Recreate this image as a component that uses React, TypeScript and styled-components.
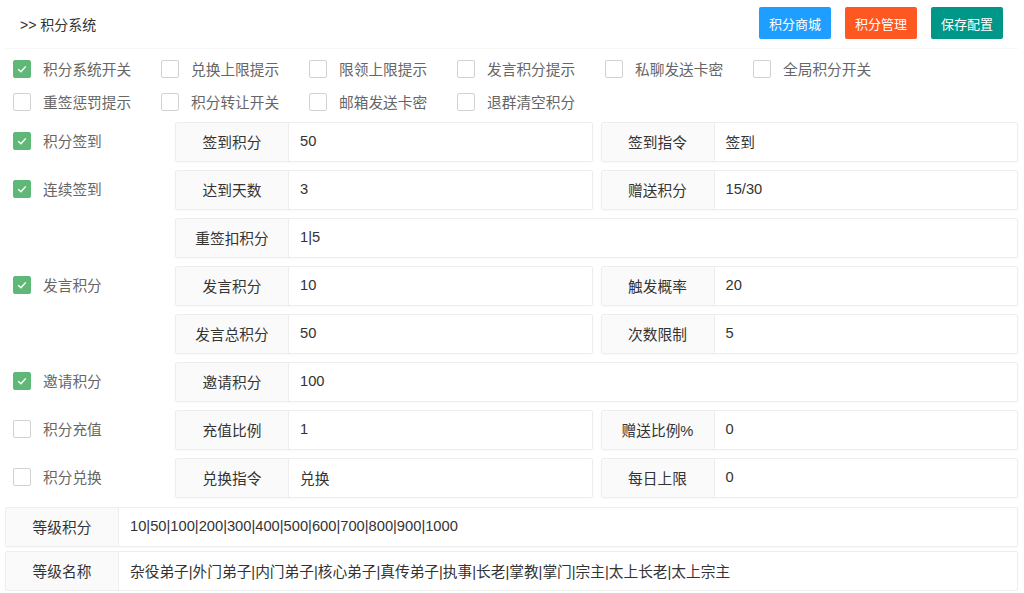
import React from 'react';
import styled, { createGlobalStyle } from 'styled-components';

const GlobalStyle = createGlobalStyle`
  html, body {
    margin: 0;
    padding: 0;
    background: #fff;
  }

  body {
    font-family: "Liberation Sans", "Noto Sans CJK SC", sans-serif;
    font-size: 14.7px;
    color: #333;
  }
`;

const Page = styled.div`
  width: 1024px;
  padding: 0 6px 0 5px;
  box-sizing: border-box;
`;

const Header = styled.div`
  height: 49px;
  padding: 0 15px;

  display: flex;
  align-items: center;
  justify-content: space-between;

  border-bottom: 1px solid #f8f8f8;
  box-sizing: border-box;
`;

const Title = styled.div`
  font-size: 14px;
  color: #333;
  margin-top: -1px;
`;

const Toolbar = styled.div`
  display: flex;
  gap: 14px;
  margin-top: -2px;
`;

const Button = styled.button<{ $color: string }>`
  height: 32px;
  padding: 0 10px;

  border: none;
  border-radius: 2px;
  background: ${ p => p.$color };
  color: #fff;

  font-family: inherit;
  font-size: 13px;
  cursor: pointer;
`;

const SwitchGrid = styled.div`
  padding: 3px 0 0 8px;
  margin-bottom: 4px;

  display: grid;
  grid-template-columns: repeat(6, 148px);
`;

const SwitchItem = styled.label`
  height: 33px;

  display: flex;
  align-items: center;

  color: #666;
  cursor: pointer;
`;

const Box = styled.span<{ $checked: boolean }>`
  width: 18px;
  height: 18px;
  flex-shrink: 0;
  margin-right: 12px;

  display: flex;
  align-items: center;
  justify-content: center;

  border: 1px solid ${ p => p.$checked ? '#5FB878' : '#d2d2d2' };
  border-radius: 2px;
  background: ${ p => p.$checked ? '#5FB878' : '#fff' };
  box-sizing: border-box;
`;

const Rows = styled.div`
  display: flex;
  flex-direction: column;
  gap: 8px;
`;

const FormRow = styled.div`
  display: flex;
`;

const RowSwitch = styled.div`
  width: 170px;
  padding: 0 0 3px 8px;
  flex-shrink: 0;

  display: flex;
  align-items: center;
  box-sizing: border-box;
`;

const Fields = styled.div`
  flex: 1;

  display: grid;
  grid-template-columns: 1fr 1fr;
  gap: 8px;
`;

const Field = styled.div<{ $wide?: boolean }>`
  height: 40px;
  grid-column: ${ p => p.$wide ? '1 / -1' : 'auto' };

  display: flex;

  border: 1px solid #eee;
  border-radius: 2px;
  box-shadow: 0 1px 2px rgba(0, 0, 0, 0.03);
  box-sizing: border-box;
`;

const FieldLabel = styled.div`
  width: 113px;
  flex-shrink: 0;
  padding-bottom: 2px;

  display: flex;
  align-items: center;
  justify-content: center;

  background: #fafafa;
  border-right: 1px solid #eee;
  color: #333;
  box-sizing: border-box;
`;

const FieldValue = styled.div`
  flex: 1;
  padding: 0 0 2px 11px;

  display: flex;
  align-items: center;

  color: #333;
`;

const LevelBlock = styled.div`
  margin-top: 9px;

  display: flex;
  flex-direction: column;
  gap: 4px;
`;

const Check = () => (
	<svg width="12" height="12" viewBox="0 0 12 12">
		<path d="M2.2 6.3 L4.9 8.8 L9.8 3.4" fill="none" stroke="#fff" strokeWidth="1.4" />
	</svg>
);

type switchProps = {
	label: string,
	checked?: boolean,
};

const Switch = ({ label, checked = false }: switchProps) => (
	<SwitchItem>
		<Box $checked={ checked }>{ checked && <Check /> }</Box>
		{ label }
	</SwitchItem>
);

type fieldType = { label: string, value: string, wide?: boolean };

type rowType = {
	switchLabel?: string,
	checked?: boolean,
	fields: fieldType[],
};

const switches: switchProps[] = [
	{ label: '积分系统开关', checked: true },
	{ label: '兑换上限提示' },
	{ label: '限领上限提示' },
	{ label: '发言积分提示' },
	{ label: '私聊发送卡密' },
	{ label: '全局积分开关' },
	{ label: '重签惩罚提示' },
	{ label: '积分转让开关' },
	{ label: '邮箱发送卡密' },
	{ label: '退群清空积分' },
];

const rows: rowType[] = [
	{ switchLabel: '积分签到', checked: true, fields: [ { label: '签到积分', value: '50' }, { label: '签到指令', value: '签到' } ] },
	{ switchLabel: '连续签到', checked: true, fields: [ { label: '达到天数', value: '3' }, { label: '赠送积分', value: '15/30' } ] },
	{ fields: [ { label: '重签扣积分', value: '1|5', wide: true } ] },
	{ switchLabel: '发言积分', checked: true, fields: [ { label: '发言积分', value: '10' }, { label: '触发概率', value: '20' } ] },
	{ fields: [ { label: '发言总积分', value: '50' }, { label: '次数限制', value: '5' } ] },
	{ switchLabel: '邀请积分', checked: true, fields: [ { label: '邀请积分', value: '100', wide: true } ] },
	{ switchLabel: '积分充值', fields: [ { label: '充值比例', value: '1' }, { label: '赠送比例%', value: '0' } ] },
	{ switchLabel: '积分兑换', fields: [ { label: '兑换指令', value: '兑换' }, { label: '每日上限', value: '0' } ] },
];

export default function App() {
	return (
		<>
			<GlobalStyle />
			<Page>
				<Header>
					<Title>&gt;&gt; 积分系统</Title>
					<Toolbar>
						<Button $color="#1E9FFF">积分商城</Button>
						<Button $color="#FF5722">积分管理</Button>
						<Button $color="#009688">保存配置</Button>
					</Toolbar>
				</Header>

				<SwitchGrid>
					{ switches.map(s => <Switch key={ s.label } { ...s } />) }
				</SwitchGrid>

				<Rows>
					{ rows.map((row, i) => (
						<FormRow key={ i }>
							<RowSwitch>
								{ row.switchLabel && <Switch label={ row.switchLabel } checked={ row.checked } /> }
							</RowSwitch>
							<Fields>
								{ row.fields.map(f => (
									<Field key={ f.label } $wide={ f.wide }>
										<FieldLabel>{ f.label }</FieldLabel>
										<FieldValue>{ f.value }</FieldValue>
									</Field>
								)) }
							</Fields>
						</FormRow>
					)) }
				</Rows>

				<LevelBlock>
					<Field>
						<FieldLabel>等级积分</FieldLabel>
						<FieldValue>10|50|100|200|300|400|500|600|700|800|900|1000</FieldValue>
					</Field>
					<Field>
						<FieldLabel>等级名称</FieldLabel>
						<FieldValue>杂役弟子|外门弟子|内门弟子|核心弟子|真传弟子|执事|长老|掌教|掌门|宗主|太上长老|太上宗主</FieldValue>
					</Field>
				</LevelBlock>
			</Page>
		</>
	);
}
